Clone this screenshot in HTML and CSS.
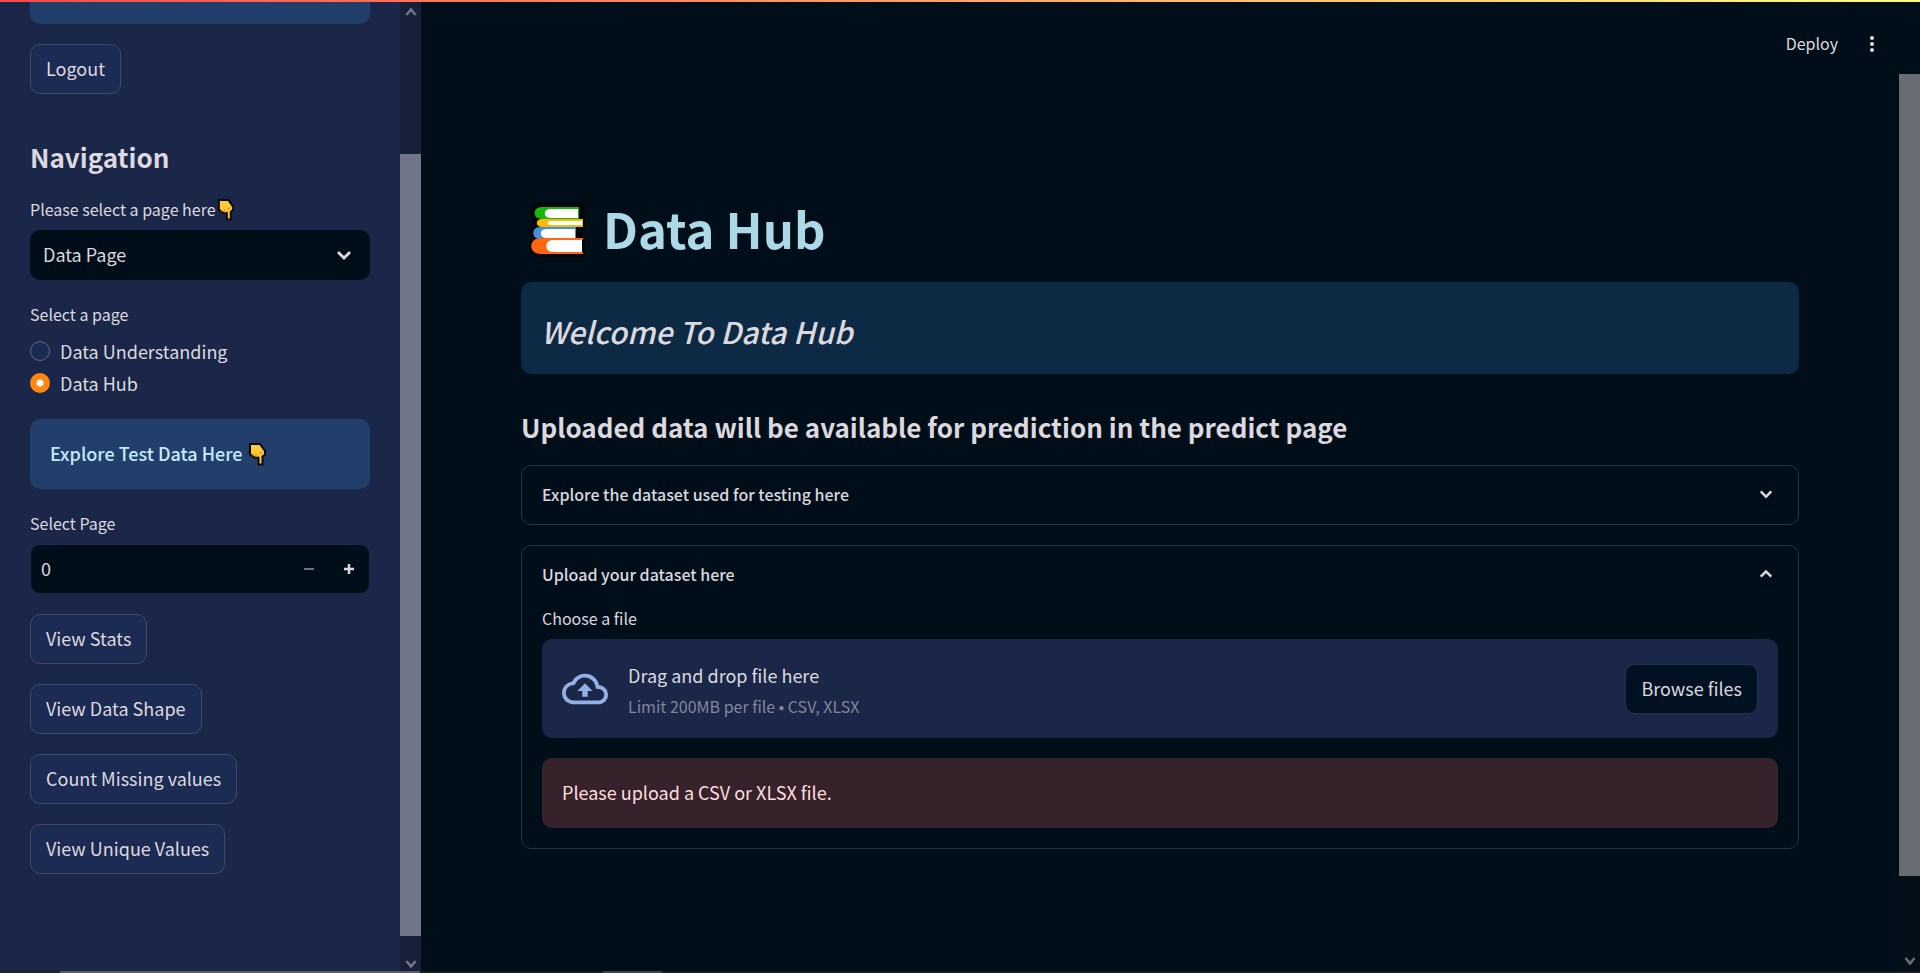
FILE: index.html
```html
<!DOCTYPE html>
<html lang="en">
<head>
<meta charset="utf-8">
<title>Data Hub</title>
<link rel="stylesheet" href="styles.css">
</head>
<body>
<svg class="defs" aria-hidden="true">
  <symbol id="hand" viewBox="0 0 18 24">
    <path d="M2 2H12L17 9V12.500L14.500 14.500V22.500H10.500V15.500L8 16L6 15L4 14L2 12Z" fill="#ffc83d" stroke="#080a0c" stroke-width="2" stroke-linejoin="round"/>
    <path d="M5 12v2.500M8 12v3.500M11 12l3-2" stroke="#d67d00" stroke-width="1" fill="none"/>
  </symbol>
  <symbol id="down" viewBox="0 0 8 8"><path d="M1.500 2 0.500 3 4 6.500 7.500 3 6.500 2 4 4.500Z" fill="currentColor"/></symbol>
  <symbol id="up" viewBox="0 0 8 8"><path d="M1.500 6 0.500 5 4 1.500 7.500 5 6.500 6 4 3.500Z" fill="currentColor"/></symbol>
</svg>
<div class="app">
  <aside class="sidebar">
    <div class="sidebar-content">
      <div class="info info-cut"></div>
      <button class="btn" type="button">Logout</button>
      <h2 class="nav-title">Navigation</h2>
      <div class="field">
        <label class="label" for="page">Please select a page here<svg class="hand" role="img" aria-label="Pointing down"><use href="#hand"/></svg></label>
        <div class="select-wrap">
          <select id="page" class="select"><option>Data Page</option></select>
          <svg class="select-icon" aria-hidden="true"><use href="#down"/></svg>
        </div>
      </div>
      <fieldset class="field radios">
        <legend class="label">Select a page</legend>
        <label class="radio"><input type="radio" name="view">Data Understanding</label>
        <label class="radio"><input type="radio" name="view" checked>Data Hub</label>
      </fieldset>
      <div class="info"><strong>Explore Test Data Here</strong><svg class="hand hand-large" role="img" aria-label="Pointing down"><use href="#hand"/></svg></div>
      <div class="field">
        <label class="label" for="number">Select Page</label>
        <div class="number">
          <input id="number" type="text" inputmode="numeric" value="0">
          <button class="step step-off" type="button" aria-label="Decrease"><svg viewBox="0 0 12 12"><path d="M1 6H11" stroke="currentColor" stroke-width="2"/></svg></button>
          <button class="step" type="button" aria-label="Increase"><svg viewBox="0 0 12 12"><path d="M1 6H11M6 1V11" stroke="currentColor" stroke-width="2.500"/></svg></button>
        </div>
      </div>
      <button class="btn" type="button">View Stats</button>
      <button class="btn" type="button">View Data Shape</button>
      <button class="btn" type="button">Count Missing values</button>
      <button class="btn" type="button">View Unique Values</button>
    </div>
    <div class="scroll scroll-side" aria-hidden="true">
      <svg class="arrow" viewBox="0 0 12 12"><path d="M1.500 9 6 3.500 10.500 9" fill="none" stroke="currentColor" stroke-width="2.500"/></svg>
      <div class="thumb"></div>
      <svg class="arrow" viewBox="0 0 12 12"><path d="M1.500 3 6 8.500 10.500 3" fill="none" stroke="currentColor" stroke-width="2.500"/></svg>
    </div>
  </aside>
  <div class="page">
    <header class="header">
      <button class="deploy" type="button">Deploy</button>
      <button class="menu" type="button" aria-label="Menu"><svg viewBox="0 0 20 20"><circle cx="10" cy="4" r="2" /><circle cx="10" cy="10" r="2"/><circle cx="10" cy="16" r="2"/></svg></button>
    </header>
    <div class="body">
      <main class="main">
        <h1 class="title">
          <svg class="books" viewBox="0 -2 60 60" role="img" aria-label="Books">
            <path d="M14 5H56V17H58V28H55V40H58V55H16C5 55 5 43 11 39C6 37 7 30 11 27C9 24 9 21 11 19C7 14 9 7 14 5Z" fill="#050607" stroke="#050607" stroke-width="5" stroke-linejoin="round"/>
            <path d="M54 7H17C7 7 7 19 17 19H54" fill="#16b70b"/>
            <path d="M53 9H25C18 9 18 18 25 18H53Z" fill="#fff"/>
            <path d="M58 19H17C10 19 10 27 17 27H58" fill="#fcb900"/>
            <path d="M57 21H25C22 21 22 25 25 25H57Z" fill="#fff"/>
            <path d="M51 27H15C6 27 6 39 15 39H51" fill="#438fdc"/>
            <path d="M50 29H21C14 29 14 38 21 38H50Z" fill="#fff"/>
            <path d="M58 38H16C3 38 3 54 16 54H58V52H56V40H58Z" fill="#ff6611"/>
            <path d="M57 40H28C19 40 19 52 28 52H57Z" fill="#fff"/>
          </svg>
          Data Hub
        </h1>
        <div class="welcome"><em>Welcome To Data Hub</em></div>
        <h2 class="subtitle">Uploaded data will be available for prediction in the predict page</h2>
        <section class="expander">
          <button class="summary" type="button" aria-expanded="false">Explore the dataset used for testing here<svg aria-hidden="true"><use href="#down"/></svg></button>
        </section>
        <section class="expander">
          <button class="summary" type="button" aria-expanded="true">Upload your dataset here<svg aria-hidden="true"><use href="#up"/></svg></button>
          <div class="details">
            <div class="label">Choose a file</div>
            <div class="dropzone">
              <svg class="cloud" viewBox="0 0 24 24" aria-hidden="true"><path d="M19.350 10.040A7.490 7.490 0 0 0 12 4C9.110 4 6.600 5.640 5.350 8.040A5.994 5.994 0 0 0 0 14c0 3.310 2.690 6 6 6h13c2.760 0 5-2.240 5-5 0-2.640-2.050-4.780-4.650-4.960zM19 18H6c-2.210 0-4-1.790-4-4 0-2.050 1.530-3.760 3.560-3.970l1.070-.110.500-.950A5.469 5.469 0 0 1 12 6c2.620 0 4.880 1.860 5.390 4.430l.300 1.500 1.530.110A2.980 2.980 0 0 1 22 15c0 1.650-1.350 3-3 3zM8 13h2.550v3h2.900v-3H16l-4-4z" fill="currentColor"/></svg>
              <div class="drop-text"><span>Drag and drop file here</span><small>Limit 200MB per file • CSV, XLSX</small></div>
              <button class="btn btn-dark" type="button">Browse files</button>
            </div>
            <div class="error" role="alert">Please upload a CSV or XLSX file.</div>
          </div>
        </section>
      </main>
      <div class="scroll scroll-main" aria-hidden="true">
        <div class="thumb"></div>
        <svg class="arrow" viewBox="0 0 12 12"><path d="M1.500 3 6 8.500 10.500 3" fill="none" stroke="currentColor" stroke-width="2.500"/></svg>
      </div>
    </div>
  </div>
  <div class="top-line"></div>
  <div class="bottom-line"></div>
</div>
</body>
</html>
```
FILE: styles.css
```css
* { box-sizing: border-box; }

body {
  margin: 0;
  background: #000e1a;
  color: #dcd8de;
  font: 18px/30px "Noto Sans CJK JP", "Noto Sans", sans-serif;
}

button, input, select { font: inherit; color: inherit; }
h1, h2 { margin: 0; }

.defs { position: absolute; width: 0; height: 0; }

.app {
  position: relative;
  display: flex;
  height: 100vh;
  overflow: hidden;
}

.top-line, .bottom-line {
  position: absolute;
  left: 0;
  right: 0;
  height: 2px;
}
.top-line { top: 0; background: linear-gradient(90deg, #ff4b4b, #fffd80); }
.bottom-line {
  bottom: 0;
  background: linear-gradient(90deg, #1f222b 60px, #555b69 60px 420px, #151c24 420px 603px, #3d454c 603px 662px, #151c24 662px);
}

.sidebar {
  display: flex;
  flex: 0 0 421px;
  background: #1a2749;
}
.sidebar-content {
  flex: 1;
  display: flex;
  flex-direction: column;
  align-items: flex-start;
  gap: 20px;
  padding: 0 30px;
}

.info {
  width: 100%;
  padding: 19px 20px 21px;
  border-radius: 10px;
  background: #223e6b;
  color: #c7ebff;
}
.info strong { font-weight: 500; }
.info-cut { height: 24px; padding: 0; border-radius: 0 0 10px 10px; }

.btn {
  height: 50px;
  padding: 0 15px 2px;
  border: 1px solid #404a68;
  border-radius: 10px;
  background: #1c2b53;
  white-space: nowrap;
}
.btn-dark { background: #001222; border-color: #26324a; }

.nav-title {
  margin-top: 25px;
  font-size: 26px;
  line-height: 36px;
  font-weight: 700;
}

.field { width: 100%; margin: 0; padding: 0; border: 0; }
.label {
  display: block;
  padding: 0;
  margin-bottom: 7px;
  font-size: 16px;
  line-height: 28px;
}
.hand { width: 17px; height: 23px; margin-left: 1px; vertical-align: -5px; }
.hand-large { width: 18px; height: 24px; margin-left: 5px; }

.select-wrap { position: relative; }
.select {
  display: block;
  width: 100%;
  height: 50px;
  padding: 0 13px 2px;
  border: 0;
  border-radius: 10px;
  background: #000e1a;
  appearance: none;
}
.select-icon {
  position: absolute;
  right: 18px;
  top: 17px;
  width: 16px;
  height: 16px;
  pointer-events: none;
}

.radio {
  display: flex;
  align-items: center;
  gap: 10px;
  height: 32px;
}
.radio input {
  width: 20px;
  height: 20px;
  margin: 0;
  border: 1px solid #616982;
  border-radius: 50%;
  background: #1c2b53;
  appearance: none;
}
.radio input:checked {
  border: 0;
  background: radial-gradient(circle, #fff 3px, #ff8710 4px);
}

.number {
  display: flex;
  height: 50px;
  border: 1px solid #1c294c;
  border-radius: 10px;
  background: #000e1a;
}
.number input {
  flex: 1;
  min-width: 0;
  padding: 0 10px 2px;
  border: 0;
  background: none;
}
.step {
  display: grid;
  place-items: center;
  width: 40px;
  padding: 0;
  border: 0;
  background: none;
}
.step svg { width: 12px; height: 12px; }
.step-off { color: #6d747b; }

.scroll {
  display: flex;
  flex-direction: column;
  align-items: center;
  flex: 0 0 21px;
}
.arrow { flex: none; width: 12px; height: 12px; }
.thumb { flex: 1; width: 100%; }
.scroll-side { padding: 6px 0 3px; background: #182039; color: #70778a; }
.scroll-side .thumb { margin: 136px 0 22px; background: #707687; }
.scroll-main { padding-bottom: 6px; background: #050f18; color: #696e74; }
.scroll-main .thumb { margin-bottom: 79px; background: #696c72; }

.page { flex: 1; min-width: 0; display: flex; flex-direction: column; }
.header {
  display: flex;
  justify-content: flex-end;
  align-items: center;
  gap: 24px;
  height: 74px;
  padding: 14px 38px 0 0;
}
.deploy, .menu { padding: 0; border: 0; background: none; }
.deploy { padding-bottom: 2px; font-size: 16px; }
.menu svg { display: block; width: 20px; height: 20px; fill: currentColor; }

.body { flex: 1; display: flex; min-height: 0; }
.main { flex: 1; min-width: 0; padding: 118px 100px 0; }

.title {
  display: flex;
  align-items: center;
  gap: 18px;
  padding-left: 4px;
  color: #add8e6;
  font-size: 49px;
  line-height: 72px;
  font-weight: 700;
}
.books { width: 60px; height: 60px; }

.welcome {
  margin-top: 18px;
  padding: 27px 20px 21px;
  border-radius: 10px;
  background: #0d2a45;
  font-size: 30px;
  line-height: 44px;
  font-weight: 500;
}
.subtitle {
  margin: 31px 0 16px;
  font-size: 26px;
  line-height: 44px;
  font-weight: 700;
}

.expander {
  margin-bottom: 20px;
  border: 1px solid #29343f;
  border-radius: 10px;
}
.summary {
  display: flex;
  justify-content: space-between;
  align-items: center;
  width: 100%;
  height: 58px;
  padding: 0 25px 2px 20px;
  border: 0;
  background: none;
  font-size: 16px;
  font-weight: 500;
}
.summary svg { width: 14px; height: 14px; }
.details { padding: 0 20px 20px; }

.dropzone {
  display: flex;
  align-items: center;
  gap: 20px;
  min-height: 99px;
  padding: 0 20px;
  border-radius: 10px;
  background: #1a2749;
}
.cloud { width: 46px; height: 46px; color: #95afe5; }
.drop-text { flex: 1; display: flex; flex-direction: column; padding-top: 4px; }
.drop-text small { color: #838699; font-size: 16px; line-height: 32px; }

.error {
  margin-top: 20px;
  padding: 19px 20px 21px;
  border-radius: 10px;
  background: #35222b;
  color: #ffdede;
}
```
